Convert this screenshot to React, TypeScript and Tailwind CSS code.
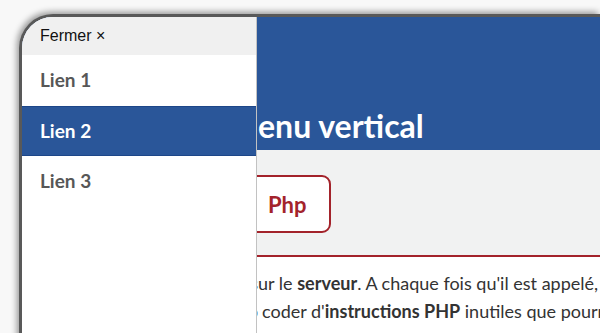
import React from 'react'

const LATO = { fontFamily: 'Lato, "Noto Sans", sans-serif' }

const LINKS = ['Lien 1', 'Lien 2', 'Lien 3']

// a row whose first part ends right under the sidebar edge
function Row({ hidden, children, className = '' }: { hidden: string; children: React.ReactNode; className?: string }) {
  return (
    <div className={`flex whitespace-nowrap ${className}`}>
      <span className="w-[236px] shrink-0 flex justify-end overflow-hidden">{hidden}</span>
      <span>{children}</span>
    </div>
  )
}

export default function App() {
  return (
    <div className="w-[600px] h-[333px] bg-[#f8f8f8] overflow-hidden pl-[19px] pt-[14px]">
      <div className="relative h-[400px] rounded-tl-[34px] border-t-[3px] border-l-[3px] border-[#595959] shadow-[-2px_-2px_6px_rgba(0,0,0,0.4)] overflow-hidden bg-white">
        {/* page */}
        <div style={LATO}>
          <header className="h-[133px] bg-[#2a5699] flex items-end pb-[4px]">
            <Row hidden="M" className="text-white font-bold text-[32px] leading-[40px]">
              enu vertical
            </Row>
          </header>

          <div className="h-[107px] bg-[#f1f2f2] border-b-2 border-[#a3232b] pt-[25px]">
            <button className="ml-[217px] h-[58px] pl-[27px] pr-[22px] bg-white border-2 border-[#a3232b] rounded-[9px] text-[#a3232b] font-bold text-[22px]">
              Php
            </button>
          </div>

          <div className="pt-[12px] text-[18px] leading-[28px] text-[#333]">
            <Row hidden="Le fichier est stocké s">
              ur le <b>serveur</b>. A chaque fois qu'il est appelé, il est exécuté
            </Row>
            <Row hidden="Il ne faut donc pas trop">
              <span className="pl-[4px]">
                coder d'<b>instructions PHP</b> inutiles que pourrait
              </span>
            </Row>
          </div>
        </div>

        {/* sidebar overlay */}
        <nav className="absolute left-0 top-0 bottom-0 w-[235px] bg-white border-r border-[#c2c2c2]">
          <div
            className="h-[38px] bg-[#f0f0f0] pl-[18px] flex items-center text-[16px] text-[#111]"
            style={{ fontFamily: '"Liberation Sans", Arial, sans-serif' }}
          >
            Fermer ×
          </div>
          {LINKS.map((l, i) => (
            <div
              key={l}
              style={LATO}
              className={
                i === 1
                  ? 'h-[50px] flex items-center pl-[18px] font-bold text-[19px] text-white bg-[#2a5699] border-y border-[#1d4688]'
                  : 'h-[51px] flex items-center pl-[18px] font-bold text-[19px] text-[#575757]'
              }
            >
              {l}
            </div>
          ))}
        </nav>
      </div>
    </div>
  )
}
